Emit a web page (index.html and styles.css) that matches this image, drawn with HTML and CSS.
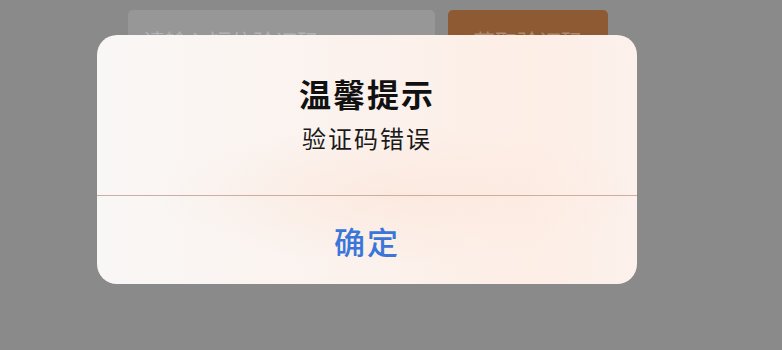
FILE: index.html
```html
<!DOCTYPE html>
<html lang="zh-CN">
<head>
<meta charset="utf-8">
<title>温馨提示</title>
<link rel="stylesheet" href="styles.css">
</head>
<body>
<div class="page">
  <div class="code-row">
    <div class="code-input">请输入短信验证码</div>
    <div class="code-btn">获取验证码</div>
  </div>
</div>
<div class="dialog">
  <div class="dialog-body">
    <div class="dialog-title">温馨提示</div>
    <div class="dialog-msg">验证码错误</div>
  </div>
  <div class="dialog-btn">确定</div>
</div>
</body>
</html>
```
FILE: styles.css
```css
html, body {
  margin: 0;
  padding: 0;
}
body {
  width: 782px;
  height: 350px;
  background: #8a8a8a;
  font-family: "Noto Sans CJK SC", "Noto Sans", sans-serif;
  overflow: hidden;
  position: relative;
}
.page {
  padding: 10px 0 0 128px;
}
.code-row {
  display: flex;
  gap: 13px;
}
.code-input {
  width: 307px;
  height: 60px;
  box-sizing: border-box;
  background: #979797;
  border-radius: 5px;
  padding-left: 15px;
  font-size: 22px;
  line-height: 60px;
  color: #b2b2b2;
}
.code-btn {
  width: 160px;
  height: 60px;
  background: #8d5a33;
  border-radius: 5px;
  font-size: 22px;
  line-height: 60px;
  text-align: center;
  color: #b08a6c;
}
.dialog {
  position: absolute;
  left: 97px;
  top: 35px;
  width: 540px;
  height: 249px;
  border-radius: 20px;
  overflow: hidden;
  background:
    radial-gradient(ellipse 240px 70px at 300px 160px, rgba(252, 228, 214, 0.55), rgba(252, 228, 214, 0)),
    linear-gradient(90deg, #f9f7f6 0%, #fbf3ef 40%, #fdeee6 80%, #fcf1ec 100%);
  display: flex;
  flex-direction: column;
}
.dialog-body {
  padding: 38px 0 0;
  height: 161px;
  box-sizing: border-box;
  border-bottom: 1px solid #cfae9f;
  text-align: center;
}
.dialog-title {
  font-size: 32px;
  font-weight: 700;
  line-height: 40px;
  letter-spacing: 2px;
  color: #111;
}
.dialog-msg {
  margin-top: 10px;
  font-size: 24px;
  line-height: 30px;
  letter-spacing: 2px;
  color: #1a1a1a;
}
.dialog-btn {
  flex: 1;
  display: flex;
  align-items: center;
  justify-content: center;
  font-size: 31px;
  font-weight: 500;
  letter-spacing: 2px;
  color: #3a76d9;
}
```
